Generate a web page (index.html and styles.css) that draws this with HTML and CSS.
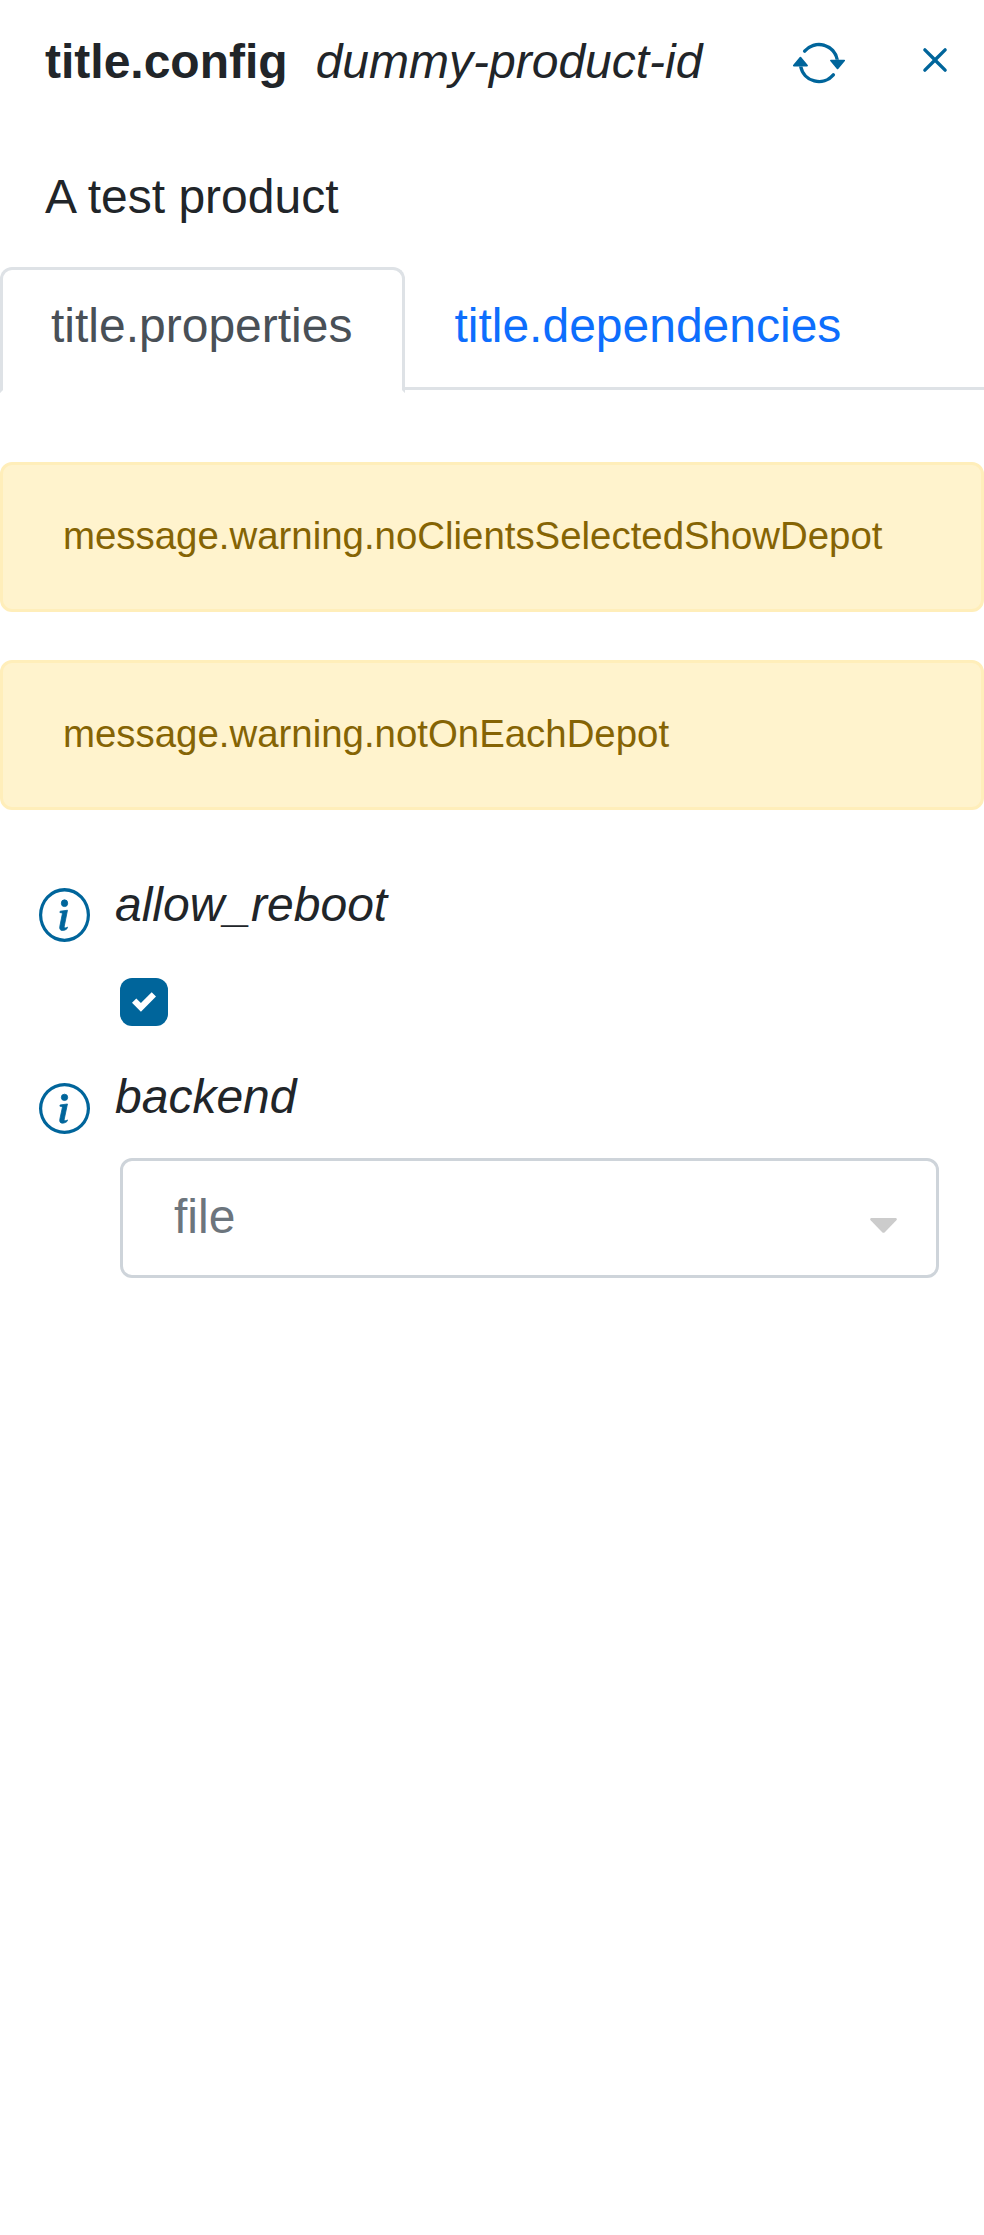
FILE: index.html
```html
<!DOCTYPE html>
<html lang="en">
<head>
<meta charset="utf-8">
<title>title.config</title>
<link rel="stylesheet" href="styles.css">
</head>
<body>
<main class="panel">
  <header class="header">
    <h1 class="title">title.config</h1>
    <span class="product">dummy-product-id</span>
    <button class="icon-button refresh" aria-label="Refresh">
      <svg class="icon" viewBox="0 0 16 16"><path d="M11.534 7h3.932a.25.25 0 0 1 .192.41l-1.966 2.36a.25.25 0 0 1-.384 0l-1.966-2.36a.25.25 0 0 1 .192-.41zm-11 2h3.932a.25.25 0 0 0 .192-.41L2.692 6.23a.25.25 0 0 0-.384 0L.342 8.59A.25.25 0 0 0 .534 9z"/><path d="M8 3c-1.552 0-2.94.707-3.857 1.818a.5.5 0 1 1-.771-.636A6.002 6.002 0 0 1 13.917 7H12.9A5.002 5.002 0 0 0 8 3zM3.1 9a5.002 5.002 0 0 0 8.757 2.182.5.5 0 1 1 .771.636A6.002 6.002 0 0 1 2.083 9H3.1z"/></svg>
    </button>
    <button class="icon-button close" aria-label="Close">
      <svg class="icon" viewBox="0 0 16 16"><path d="M4.646 4.646a.5.5 0 0 1 .708 0L8 7.293l2.646-2.647a.5.5 0 0 1 .708.708L8.707 8l2.647 2.646a.5.5 0 0 1-.708.708L8 8.707l-2.646 2.647a.5.5 0 0 1-.708-.708L7.293 8 4.646 5.354a.5.5 0 0 1 0-.708z"/></svg>
    </button>
  </header>
  <p class="description">A test product</p>
  <nav class="tabs">
    <a class="tab tab-active">title.properties</a>
    <a class="tab">title.dependencies</a>
  </nav>
  <section class="alerts">
    <div class="alert">message.warning.noClientsSelectedShowDepot</div>
    <div class="alert">message.warning.notOnEachDepot</div>
  </section>
  <section class="fields">
    <div class="field">
      <svg class="info info-tall" viewBox="0 0 16 16" preserveAspectRatio="none"><path d="M8 15A7 7 0 1 1 8 1a7 7 0 0 1 0 14zm0 1A8 8 0 1 0 8 0a8 8 0 0 0 0 16z"/><path class="info-mark" d="m8.93 6.588-2.29.287-.082.38.45.083c.294.07.352.176.288.469l-.738 3.468c-.194.897.105 1.319.808 1.319.545 0 1.178-.252 1.465-.598l.088-.416c-.2.176-.492.246-.686.246-.275 0-.375-.193-.304-.533L8.93 6.588zM9 4.5a1 1 0 1 1-2 0 1 1 0 0 1 2 0z"/></svg>
      <label class="label">allow_reboot</label>
      <span class="checkbox" role="checkbox" aria-checked="true">
        <svg class="check" viewBox="0 0 8 8"><path d="M6.564.75l-3.59 3.612-1.538-1.55L0 4.26l2.974 2.99L8 2.193z"/></svg>
      </span>
    </div>
    <div class="field">
      <svg class="info" viewBox="0 0 16 16"><path d="M8 15A7 7 0 1 1 8 1a7 7 0 0 1 0 14zm0 1A8 8 0 1 0 8 0a8 8 0 0 0 0 16z"/><path class="info-mark" d="m8.93 6.588-2.29.287-.082.38.45.083c.294.07.352.176.288.469l-.738 3.468c-.194.897.105 1.319.808 1.319.545 0 1.178-.252 1.465-.598l.088-.416c-.2.176-.492.246-.686.246-.275 0-.375-.193-.304-.533L8.93 6.588zM9 4.5a1 1 0 1 1-2 0 1 1 0 0 1 2 0z"/></svg>
      <label class="label">backend</label>
      <div class="select">
        <span class="value">file</span>
        <svg class="caret" viewBox="0 0 27 15"><path d="M1.2 0H25.8Q27.6 .8 26.4 2.2L14.8 14.2Q13.5 15.4 12.2 14.2L.6 2.2Q-.6 .8 1.2 0z"/></svg>
      </div>
    </div>
  </section>
</main>
</body>
</html>
```

FILE: styles.css
```css
* {
  box-sizing: border-box;
}

body {
  margin: 0;
  background: #fff;
  color: #212529;
  font: 48px/72px "Liberation Sans", Arial, sans-serif;
}

.panel {
  min-height: 2235px;
}

.header {
  display: flex;
  align-items: flex-start;
  height: 98px;
  padding: 26px 22px 0 45px;
}

.title {
  margin: 0;
  font-size: 48px;
  font-weight: bold;
}

.product {
  margin-left: 28px;
  font-style: italic;
}

.icon-button {
  display: flex;
  padding: 0;
  border: 0;
  background: none;
  color: #00659b;
}

.refresh {
  margin: 10px 0 0 auto;
}

.close {
  margin: 7px 0 0 62px;
}

.icon {
  width: 54px;
  height: 54px;
  fill: currentColor;
}

.description {
  margin: 63px 45px 34px;
}

.tabs {
  display: flex;
  height: 123px;
  border-bottom: 3px solid #dee2e6;
}

.tab {
  height: 126px;
  padding: 20px 48px 0;
  border: 3px solid transparent;
  border-radius: 12px 12px 0 0;
  color: #0d6efd;
}

.tab-active {
  width: 405px;
  margin-right: -1.6px;
  border-color: #dee2e6 #dee2e6 #fff;
  background: #fff;
  color: #495057;
}

.alerts {
  display: flex;
  flex-direction: column;
  gap: 48px;
  padding-top: 72px;
}

.alert {
  height: 150px;
  padding: 42px 60px 0;
  border: 3px solid #ffeeba;
  border-radius: 12px;
  background: #fff3cd;
  color: #856404;
  font-size: 38.4px;
  line-height: 57.6px;
}

.fields {
  display: grid;
  gap: 35px;
  padding: 59px 45px 0 39px;
}

.field {
  display: grid;
  grid-template-columns: 76px 1fr;
}

.info {
  width: 51px;
  height: 51px;
  margin-top: 22px;
  fill: #00659b;
}

.info-tall {
  height: 54px;
  margin-top: 19px;
}

.info-mark {
  stroke: #00659b;
  stroke-width: .25;
}

.label {
  height: 72px;
  font-style: italic;
}

.checkbox {
  grid-column: 2;
  display: grid;
  place-items: center;
  width: 48px;
  height: 48px;
  margin: 36px 0 0 5px;
  border-radius: 12px;
  background: #00659b;
}

.check {
  width: 24px;
  height: 24px;
  fill: #fff;
}

.select {
  grid-column: 2;
  display: flex;
  align-items: flex-start;
  justify-content: space-between;
  height: 120px;
  margin: 24px 0 0 5px;
  padding: 20px 39px 0 51px;
  border: 3px solid #ced4da;
  border-radius: 12px;
}

.value {
  color: #6c757d;
}

.caret {
  width: 27px;
  height: 15px;
  margin-top: 37px;
  fill: #ccc;
}
```
